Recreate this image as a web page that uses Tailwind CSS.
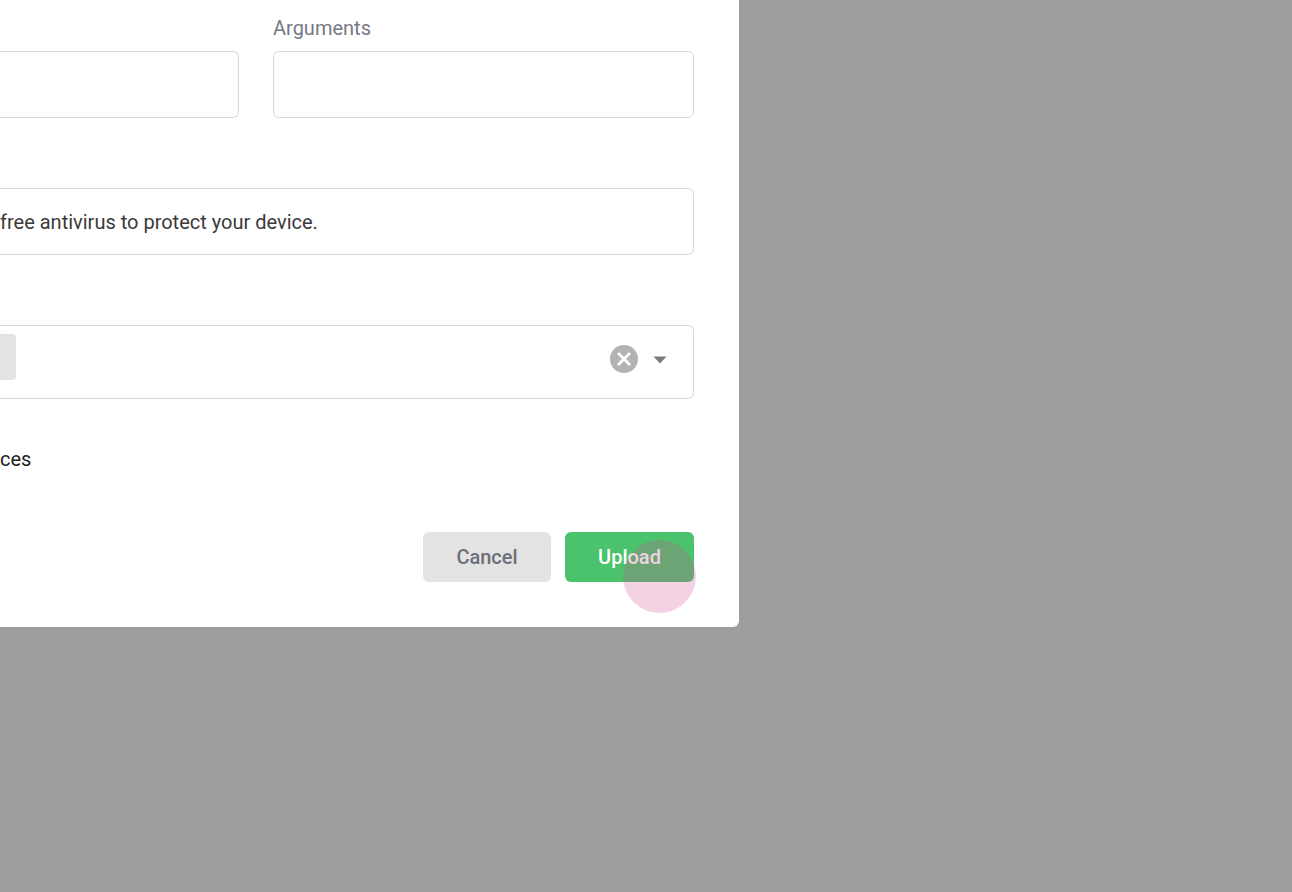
<!DOCTYPE html>
<html lang="en">
  <head>
    <meta charset="UTF-8">
    <meta name="viewport" content="width=device-width, initial-scale=1.0">
    <title>Upload</title>
    <script src="https://cdn.jsdelivr.net/npm/@tailwindcss/browser@4"></script>
  </head>
  <body class="min-h-screen bg-[#9d9d9d] font-[Roboto,sans-serif] text-xl text-[#3a3a3a]">
    <main class="w-[57.2%] bg-white rounded-br-md">
      <form class="flex flex-col pt-3 pr-[45px] pb-[45px]">
        <div class="grid grid-cols-[239fr_421fr] items-end gap-[34px]">
          <input type="text" aria-label="Name" class="h-[67px] w-full border border-l-0 border-[#d8d8d8] rounded-r-md">
          <div>
            <label for="arguments" class="block h-[39px] leading-8 text-[#777885]">Arguments</label>
            <input type="text" id="arguments" class="block h-[67px] w-full px-5 border border-[#d8d8d8] rounded-md">
          </div>
        </div>
        <input type="text" aria-label="Description" value="free antivirus to protect your device." class="mt-[70px] h-[67px] w-full border border-l-0 border-[#d8d8d8] rounded-r-md">
        <!-- multi select: chip, clear button, caret -->
        <div class="relative mt-[70px] flex h-[74px] items-start border border-l-0 border-[#d8d8d8] rounded-r-md">
          <span class="mt-2 h-[46px] w-4 bg-[#e3e3e3] rounded-r-sm"></span>
          <select aria-label="Platform" class="h-full flex-1 appearance-none outline-none">
            <option value=""></option>
          </select>
          <button type="button" aria-label="Clear" class="absolute right-[55px] top-[19px]">
            <svg class="size-7" viewBox="0 0 28 28" fill="none">
              <circle cx="14" cy="14" r="14" fill="#b3b3b3"/>
              <path d="M8 8l12 12M20 8L8 20" stroke="#fff" stroke-width="2.8"/>
            </svg>
          </button>
          <svg class="pointer-events-none absolute right-[26px] top-[30px] h-2 w-[14px]" viewBox="0 0 14 8" fill="#7b7b7b">
            <path d="M0.5 0.5h13L7 7.5z"/>
          </svg>
        </div>
        <p class="mt-11 leading-8 text-[#222222]">ces</p>
        <div class="mt-[57px] flex justify-end gap-[14px] font-medium">
          <button type="button" class="h-[50px] w-32 bg-[#e3e3e3] text-[#6b6f7b] rounded-md">Cancel</button>
          <div class="relative">
            <button type="submit" class="h-[50px] w-[129px] bg-[#4bc26c] text-white rounded-md">Upload</button>
            <!-- click highlight -->
            <span class="pointer-events-none absolute left-[58px] top-2 size-[73px] rounded-full bg-[#cc5092]/26"></span>
          </div>
        </div>
      </form>
    </main>
  </body>
</html>
